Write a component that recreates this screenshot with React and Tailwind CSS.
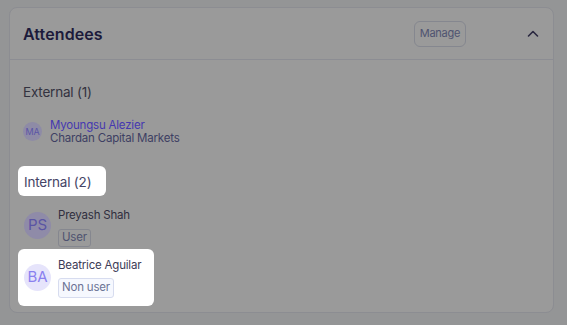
import React from 'react';

const ChevronUp = () => (
  <svg width="14" height="14" viewBox="0 0 14 14" fill="none">
    <path d="M2.5 9L7 4.5L11.5 9" stroke="#2a2840" strokeWidth="1.6" strokeLinecap="round" strokeLinejoin="round" />
  </svg>
);

export default function App() {
  return (
    <div className="w-[567px] h-[325px] bg-[#949596] pt-[7px] pl-[9px] overflow-hidden" style={{ fontFamily: 'Inter, "Noto Sans", sans-serif' }}>
      <div className="w-[545px] h-[306px] bg-[#9a9a9a] border border-[#8c8d92] rounded-[8px]">
        {/* header */}
        <div className="h-[52px] flex items-center pl-[13px] pr-[13px] border-b border-[#8c8d93]">
          <h2 className="text-[16px] font-semibold text-[#1c1a3b] tracking-[0.1px]">Attendees</h2>
          <div className="ml-auto flex items-center">
            <button className="h-[26px] px-[5px] border border-[#85878f] rounded-[6px] text-[11px] tracking-[-0.3px] text-[#4f5370] leading-none">Manage</button>
            <div className="ml-[60px] mt-[1px]"><ChevronUp /></div>
          </div>
        </div>

        {/* body */}
        <div className="px-[8px] pt-[23px] tracking-[-0.2px]">
          <p className="pl-[5px] text-[13.5px] text-[#33323f] leading-[18px]">External (1)</p>

          <div className="flex items-center mt-[18px] pl-[5px]">
            <div className="w-[19px] h-[19px] rounded-full bg-[#8e8ba6] flex items-center justify-center text-[9px] text-[#5b55a6]">MA</div>
            <div className="ml-[8px] leading-[12.5px] whitespace-nowrap">
              <p className="text-[11.5px] text-[#4538b0]">Myoungsu Alezier</p>
              <p className="text-[11.5px] text-[#3e4063]">Chardan Capital Markets</p>
            </div>
          </div>

          <div className="mt-[22px] flex items-center w-[88px] h-[30px] px-[6px] bg-white rounded-[6px]">
            <span className="text-[13.5px] text-[#454466] pt-[2px]">Internal (2)</span>
          </div>

          <div className="flex items-start mt-[11px] pl-[6px]">
            <div className="mt-[5px] w-[27px] h-[27px] rounded-full bg-[#8f8ba8] flex items-center justify-center text-[15px] text-[#5a54a4]">PS</div>
            <div className="ml-[7px] whitespace-nowrap">
              <p className="text-[11.5px] text-[#2f2e3e] leading-[16px]">Preyash Shah</p>
              <span className="mt-[2px] inline-flex items-center h-[18px] px-[3px] border border-[#85878f] rounded-[3px] text-[11.5px] text-[#4f5370]">User</span>
            </div>
          </div>

          <div className="mt-[2px] w-[136px] h-[57px] bg-white rounded-[6px] flex items-center px-[6px]">
            <div className="w-[27px] h-[27px] rounded-full bg-[#e6e4fb] flex items-center justify-center text-[15px] text-[#8a80ef]">BA</div>
            <div className="ml-[7px] whitespace-nowrap">
              <p className="text-[11.5px] text-[#3c3b56] leading-[16px]">Beatrice Aguilar</p>
              <span className="mt-[2px] inline-flex items-center h-[20px] px-[3px] bg-[#f6f8fe] border border-[#d7dcef] rounded-[3px] text-[11.5px] text-[#6c7395]">Non user</span>
            </div>
          </div>
        </div>
      </div>
    </div>
  );
}
